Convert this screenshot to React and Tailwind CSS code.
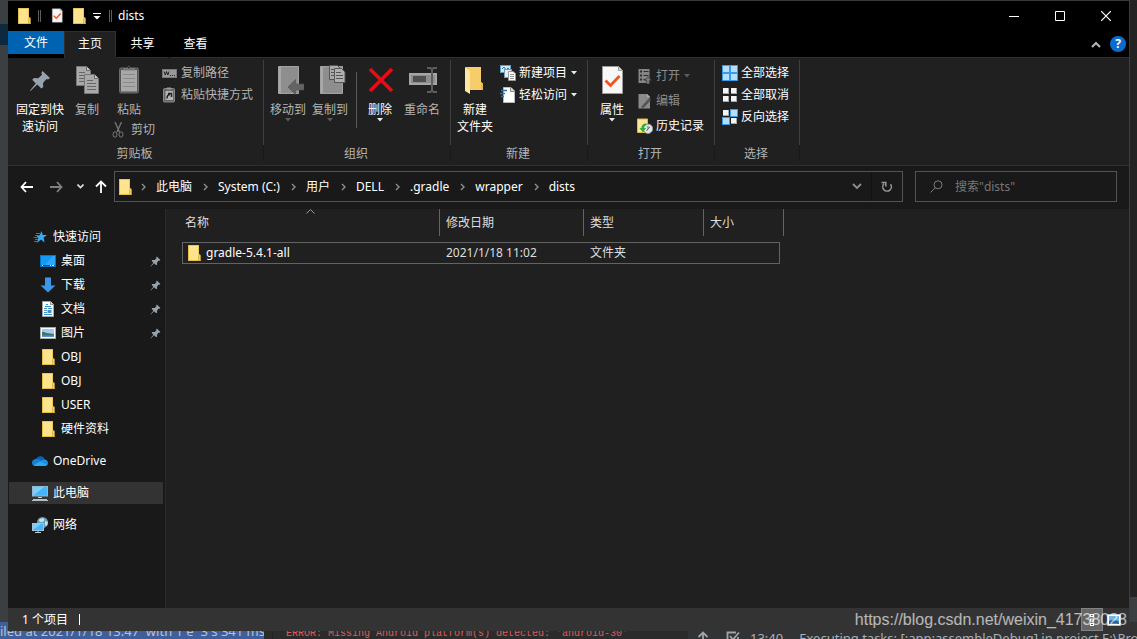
// src/App.jsx
import React, { useState } from 'react';

/* ---------- icons ---------- */

const FolderIcon = () => (
  <svg width="16" height="16" viewBox="0 0 16 16" className="shrink-0">
    <path d="M2 0h11v9.500l1.500.8V16H2z" fill="#ffe48d" />
    <path d="M2 15h12.500v1H2zM2 0h1v16H2zM12.300 0h.7v9.500h-.7zM2 0h11v.7H2z" fill="#e6bd45" />
    <path d="M12.500 10.500l1.500-1v6h-1.500z" fill="#ffe48d" stroke="#d9ab33" strokeWidth="0.8" />
  </svg>
);

const BigFolderIcon = () => (
  <svg width="32" height="32" viewBox="0 0 32 32">
    <path d="M6 2h16v15l2 1.500V25H11V6z" fill="#f7cd6b" />
    <path d="M6 2l5 3.500V29l-5-3z" fill="#ffe7a2" />
    <path d="M22 17l2 1.500V25h-2z" fill="#e9b84c" />
  </svg>
);

const CheckDocIcon = ({ size }) => (
  <svg width={size} height={size} viewBox="0 0 32 32" className="shrink-0">
    <path d="M6.500 1.500h16l4 4v23h-20z" fill="#f7f7f7" stroke="#9b9b9b" />
    <path d="M22.500 1.500v4h4" fill="#d8d8d8" stroke="#9b9b9b" />
    <path d="M9.500 15.500l5 5 9-9.500" fill="none" stroke="#f0541e" strokeWidth="2.800" />
  </svg>
);

const PinIcon = ({ size }) => (
  <svg width={size} height={size} viewBox="0 0 22 22" className="shrink-0">
    <path d="M13.500 1l7.500 7-2 1.500-1.500-.4-3.500 3.800.3 4-2 1.600-4-4L1.500 21 1 20.500l5.800-7-3.600-3.800L5 8l4.300.2L13 4.700 12.300 3z" fill="#98a2aa" />
  </svg>
);

const Sheet = ({ x, y }) => (
  <g transform={`translate(${x} ${y})`}>
    <path d="M.5.5h10l4 4v15H.5z" fill="#a9a9a9" stroke="#777" />
    <path d="M10.500.5v4h4" fill="#ccc" stroke="#666" />
    <path d="M3 6.500h6M3 9.500h9M3 12.500h9M3 15.500h9" stroke="#666" />
  </g>
);

const CopyIcon = () => (
  <svg width="32" height="32" viewBox="0 0 32 32">
    <Sheet x={5} y={1} />
    <Sheet x={13} y={9} />
  </svg>
);

const PasteIcon = () => (
  <svg width="32" height="32" viewBox="0 0 32 32">
    <rect x="6.500" y="3" width="19" height="25" rx="1.500" fill="#555" stroke="#6b6b6b" />
    <rect x="8" y="5" width="16" height="21.500" fill="#a8a8a8" />
    <path d="M10 9.500h12M10 13.500h12M10 17.500h12M10 21.500h12" stroke="#8a8a8a" />
    <path d="M10 5.500V3h4l2-2.500L18 3h4v2.500z" fill="#777" />
    <circle cx="16" cy="2.500" r="1" fill="#222" />
  </svg>
);

const ScissorsIcon = () => (
  <svg width="16" height="16" viewBox="0 0 16 16" fill="none" stroke="#777" className="shrink-0">
    <path d="M3 0l4.500 10M9.500 0L5 10" strokeWidth="1.300" />
    <ellipse cx="3" cy="12.500" rx="2" ry="2.700" />
    <ellipse cx="9" cy="12.500" rx="2" ry="2.700" />
  </svg>
);

const PathIcon = () => (
  <svg width="16" height="16" viewBox="0 0 16 16" className="shrink-0">
    <rect x="0.500" y="4.500" width="14" height="8" fill="#999" stroke="#777" />
    <path d="M2 6.500l1.300 3.500 1.200-3.500L5.800 10 7 6.500M8 10.500h1M10 10.500h1M12 10.500h1" fill="none" stroke="#222" />
  </svg>
);

const PasteLinkIcon = () => (
  <svg width="16" height="16" viewBox="0 0 16 16" className="shrink-0">
    <rect x="1.500" y="1.500" width="11" height="13.500" rx="1" fill="#666" stroke="#888" />
    <rect x="3.500" y="4" width="7.500" height="9" fill="#b5b5b5" />
    <path d="M5 0.500h4v2H5z" fill="#999" />
    <path d="M5 11.500c0-3 1-4 3-4M6 6.500h3.500V10" fill="none" stroke="#222" strokeWidth="1.500" />
  </svg>
);

const MoveToIcon = () => (
  <svg width="32" height="32" viewBox="0 0 32 32">
    <path d="M6.500 1.500h20v27h-20z" fill="#8e8e8e" stroke="#a2a2a2" />
    <path d="M7 2h2v26H7z" fill="#a8a8a8" />
    <path d="M16 22l7.500-7.500V19H32v6h-8.500v4.500z" fill="#646464" stroke="#505050" strokeWidth="0.600" />
  </svg>
);

const CopyToIcon = () => (
  <svg width="32" height="32" viewBox="0 0 32 32">
    <path d="M6.500 1.500h22v27h-22z" fill="#8e8e8e" stroke="#a2a2a2" />
    <path d="M7 2h2v26H7z" fill="#a8a8a8" />
    <path d="M15.500.5h8l3 3v11h-11z" fill="#aaa" stroke="#555" />
    <path d="M17 4.500h5M17 7.500h5M17 10.500h5" stroke="#555" />
    <path d="M20.500 3.500h7l3.500 3.500v10.500H20.500z" fill="#b0b0b0" stroke="#555" />
    <path d="M22 7.500h5M22 10.500h7M22 13.500h7" stroke="#555" />
  </svg>
);

const DeleteIcon = () => (
  <svg width="32" height="32" viewBox="0 0 32 32">
    <path d="M6 4l22 22M28 4L6 26" stroke="#e80c17" strokeWidth="3.600" />
  </svg>
);

const RenameIcon = () => (
  <svg width="32" height="32" viewBox="0 0 32 32">
    <rect x="4" y="9" width="26" height="10" fill="#8d8d8d" stroke="#a5a5a5" strokeWidth="2" />
    <rect x="7" y="11" width="13" height="6" fill="#4f4f4f" />
    <path d="M21 3h3l2 1 2-1h3M26 3.500V26M21 27h3l2-1 2 1h3" fill="none" stroke="#5e5e5e" strokeWidth="2" />
  </svg>
);

const NewItemIcon = () => (
  <svg width="16" height="16" viewBox="0 0 16 16" className="shrink-0">
    <rect x="0.500" y="0.500" width="10" height="7" fill="#cfe9fb" stroke="#5f9fc4" />
    <path d="M2 4l2-2 2 3 2-2 2 2" fill="none" stroke="#2f76b0" />
    <rect x="4.500" y="4.500" width="7" height="8" fill="#eee" stroke="#7b9bb0" />
    <path d="M8.500 6.500h4.500l2.500 2v7h-7z" fill="#fff" stroke="#999" />
    <path d="M10 9.500h4M10 11.500h4M10 13.500h4" stroke="#999" />
  </svg>
);

const EasyAccessIcon = () => (
  <svg width="16" height="16" viewBox="0 0 16 16" className="shrink-0">
    <path d="M3.500.5h7.500l3.500 3.500v11.500h-11z" fill="#fff" stroke="#bbb" />
    <path d="M10.500.5v4h4" fill="#ddd" stroke="#888" />
    <path d="M1 3.500h6M0 6.500h5M1 9.500h3" stroke="#1f73b8" strokeWidth="1.300" />
  </svg>
);

const OpenIcon = () => (
  <svg width="16" height="16" viewBox="0 0 16 16" className="shrink-0">
    <path d="M1.500 1h11v14h-11z" fill="#858585" />
    <path d="M3 2.500h2v2H3zM3 6.500h2v2H3zM3 10.500h2v2H3zM6.500 3h5v1h-5zM6.500 7h5v1h-5zM6.500 11h3v1h-3z" fill="#303030" />
    <path d="M9.500 16v-3.500H7.500l3.500-4 3.500 4h-2V16z" fill="#777" stroke="#303030" strokeWidth="0.600" />
  </svg>
);

const EditIcon = () => (
  <svg width="16" height="16" viewBox="0 0 16 16" className="shrink-0">
    <path d="M1.500 1h8.500l3 3v11.500H1.500z" fill="#8a8a8a" />
    <path d="M10 1v3h3" fill="#b0b0b0" />
    <path d="M5 13.500L12.500 5 14 6.500 7 14l-2 .5z" fill="#5a5a5a" stroke="#333" strokeWidth="0.500" />
  </svg>
);

const HistoryIcon = () => (
  <svg width="16" height="16" viewBox="0 0 16 16" className="shrink-0">
    <path d="M.5 1h10v13.500H.5z" fill="#fbe596" stroke="#e2b93c" />
    <circle cx="11" cy="10.800" r="4.700" fill="#e3e6e8" stroke="#8d9499" />
    <path d="M11 8v3l2-2M11 11l-1.500 2" stroke="#666" fill="none" />
    <path d="M9.500 5.500C6 5.500 4.500 7.500 4.500 10H2.500l3.500 4.500L9 10H7c0-1.500.8-2.500 2.500-3z" fill="#2eb135" />
  </svg>
);

const tileSpots = [[0, 0], [8, 0], [0, 8], [8, 8]];

const TilesIcon = ({ on }) => (
  <svg width="16" height="16" viewBox="0 0 16 16" className="shrink-0">
    {tileSpots.map(([x, y], index) => (
      on.includes(index) ? (
        <g key={index}>
          <rect x={x} y={y} width="8" height="8" fill="#3b9ae8" />
          <rect x={x + 1} y={y + 1} width="6" height="6" fill="#b4defc" />
        </g>
      ) : (
        <g key={index}>
          <rect x={x + 1} y={y + 1} width="6" height="6" fill="#a8a8a8" />
          <rect x={x + 2} y={y + 2} width="4" height="4" fill="#fff" />
          <rect x={x + 1} y={y + 1} width="5" height="5" fill="#f4f4f4" />
        </g>
      )
    ))}
  </svg>
);

const StarIcon = () => (
  <svg width="16" height="16" viewBox="0 0 16 16" className="shrink-0">
    <path d="M9.500 2l1.300 4H15l-3.400 2.600L12.500 13.500 9 10.600 5 14l1.300-5L4 6.300h3.800z" fill="#35adf5" />
    <path d="M4 4.500h4M3 6.500h4M1.500 8.500h5M3 10.500h3M2 12.500h4" stroke="#1c7fc4" />
  </svg>
);

const DesktopIcon = () => (
  <svg width="16" height="16" viewBox="0 0 16 16" className="shrink-0">
    <rect x="0.500" y="2.500" width="15" height="11" fill="#1298f5" stroke="#0b72c4" />
    <path d="M5 12L13 3h2v9z" fill="#2ea6fb" />
    <path d="M1 12.500h14" stroke="#0a4f8c" />
    <path d="M2 12.500h1M10 12.500h1M12 12.500h2" stroke="#fff" />
  </svg>
);

const DownloadIcon = () => (
  <svg width="16" height="16" viewBox="0 0 16 16" className="shrink-0">
    <path d="M5 .5h6v8h4.500L8 15.500.5 8.500H5z" fill="#3a97e8" />
  </svg>
);

const DocumentIcon = () => (
  <svg width="16" height="16" viewBox="0 0 16 16" className="shrink-0">
    <path d="M2.500.5h8l3 3v12h-11z" fill="#fff" stroke="#a5a5a5" />
    <path d="M10.500.5v3h3" fill="#ddd" stroke="#999" />
    <path d="M6 3.500h2M5 5.500h6M4 7.500h3M8 7.500h4M4 13.500h8M4 11.500h3" stroke="#3291cf" />
    <path d="M7.500 9h4v3h-4z" fill="#4c92b8" />
    <path d="M4 9.500h3" stroke="#888" />
  </svg>
);

const PictureIcon = () => (
  <svg width="16" height="16" viewBox="0 0 16 16" className="shrink-0">
    <rect x="0.500" y="2.500" width="15" height="11" fill="#fff" stroke="#a9a9a9" />
    <path d="M2 4h12v8H2z" fill="#9fcdf0" />
    <path d="M2 7c2-1 3 1 5 1s4 1 7 1v3H2z" fill="#3f7268" />
    <path d="M2 10.500h12V12H2z" fill="#5b93c2" />
  </svg>
);

const CloudIcon = () => (
  <svg width="16" height="16" viewBox="0 0 16 16" className="shrink-0">
    <path d="M4 6.500C5 3.500 8 2.500 10 3.500c1.500.6 2.300 1.800 2.600 3L9 10z" fill="#0a62b8" />
    <path d="M3.500 6C1.500 6.200 0 7.800 0 9.700c0 1 .4 2 1 2.600L9.500 8.500C8 6.500 6 5.500 3.500 6z" fill="#1180d8" />
    <path d="M12 6.400c2.300-.2 4 1.400 4 3.500 0 .8-.3 1.500-.8 2.100L8.500 8.400C9.200 7.200 10.500 6.500 12 6.400z" fill="#1a90e6" />
    <path d="M8.500 8.300l7 3.500c-.6.800-1.500 1.200-2.500 1.200H3.500c-1 0-1.900-.3-2.500-.9z" fill="#2aa9f2" />
  </svg>
);

const ComputerIcon = () => (
  <svg width="16" height="16" viewBox="0 0 16 16" className="shrink-0">
    <rect x="0.500" y="1.500" width="15" height="9.500" fill="#45b3f7" stroke="#8fb9d3" />
    <path d="M1 11V2h11z" fill="#7bcdfb" />
    <path d="M6 12.500h4" stroke="#c3ccd2" />
    <path d="M1 14.500h14M0 15.500h16" stroke="#b4bdc3" />
  </svg>
);

const NetworkIcon = () => (
  <svg width="16" height="16" viewBox="0 0 16 16" className="shrink-0">
    <circle cx="10.500" cy="5.500" r="5.500" fill="#6b9fb8" />
    <path d="M7 3c2-2 4-2 5-1s-1 3-2 3-3 0-3-2zM13 4l3 1-1 4-2-1z" fill="#c9e2ea" />
    <rect x="0.500" y="6.500" width="11" height="7" fill="#45b3f7" stroke="#9cc4da" />
    <path d="M1 13V7h8z" fill="#7bcdfb" />
    <path d="M3 15.500h6M6 14v1" stroke="#c3ccd2" />
  </svg>
);

const Caret = ({ className = 'fill-[#e8e8e8]' }) => (
  <svg width="6" height="4" viewBox="0 0 6 4" className={`shrink-0 ${className}`}>
    <path d="M0 0h6L3 3.500z" />
  </svg>
);

const Chevron = () => (
  <svg width="5" height="8" viewBox="0 0 5 8" className="shrink-0">
    <path d="M1 1l3 3-3 3" fill="none" stroke="#8f8f8f" strokeWidth="1.400" />
  </svg>
);

const Bars = () => <span className="h-3 w-[3px] border-x border-[#5c5c5c]" />;

/* ---------- ribbon ---------- */

const BigButton = ({ icon, lines, caret, muted, className = 'w-[42px]' }) => (
  <button className={`flex shrink-0 flex-col items-center pt-[5px] leading-[17px] ${muted ? 'text-[#b4b4b4]' : 'text-white'} ${className}`}>
    <span className="mb-1 size-8">{icon}</span>
    {lines.map((line) => (
      <span key={line} className="whitespace-nowrap">{line}</span>
    ))}
    {caret && <Caret className={muted ? 'fill-[#5c5c5c]' : 'fill-[#e8e8e8]'} />}
  </button>
);

const SmallButton = ({ icon, label, caret, tone = 'text-white', className = 'h-[22px]' }) => (
  <button className={`flex items-center gap-[3px] whitespace-nowrap ${tone} ${className}`}>
    {icon}
    <span>{label}</span>
    {caret && <Caret className={tone === 'text-white' ? 'ml-px fill-[#e8e8e8]' : 'ml-px fill-[#5c5c5c]'} />}
  </button>
);

const Group = ({ label, className, children }) => (
  <section className={`flex shrink-0 flex-col ${className}`}>
    <div className="flex h-[85px] border-r border-[#3f3f3f]">{children}</div>
    <h2 className="h-4 border-r border-[#191919] pr-[2px] text-center leading-[18px] text-[#b4b4b4]">{label}</h2>
  </section>
);

const Ribbon = () => (
  <div className="flex h-[108px] shrink-0 overflow-hidden border-b border-[#2f2f2f] bg-[#202020] pt-[2px]">
    <Group label="剪贴板" className="w-64">
      <BigButton className="ml-2 w-12" icon={<span className="flex size-8 items-center justify-center"><PinIcon size={22} /></span>} lines={['固定到快', '速访问']} />
      <BigButton className="ml-[2px] w-[42px]" muted icon={<CopyIcon />} lines={['复制']} />
      <div className="flex w-[46px] flex-col">
        <BigButton className="w-[42px]" muted icon={<PasteIcon />} lines={['粘贴']} />
        <SmallButton className="ml-1 h-6" tone="text-[#b4b4b4]" icon={<ScissorsIcon />} label="剪切" />
      </div>
      <div className="ml-2 flex flex-col pt-[2px]">
        <SmallButton tone="text-[#b4b4b4]" icon={<PathIcon />} label="复制路径" />
        <SmallButton tone="text-[#b4b4b4]" icon={<PasteLinkIcon />} label="粘贴快捷方式" />
      </div>
    </Group>
    <Group label="组织" className="w-[187px]">
      <BigButton className="ml-[3px] w-[42px]" muted caret icon={<MoveToIcon />} lines={['移动到']} />
      <BigButton muted caret icon={<CopyToIcon />} lines={['复制到']} />
      <span className="ml-[5px] mr-[2px] mt-3 h-14 w-px bg-[#5a5a5a]" />
      <BigButton caret icon={<DeleteIcon />} lines={['删除']} />
      <BigButton muted icon={<RenameIcon />} lines={['重命名']} />
    </Group>
    <Group label="新建" className="w-[137px]">
      <BigButton className="ml-[3px] w-[42px]" icon={<BigFolderIcon />} lines={['新建', '文件夹']} />
      <div className="ml-1 flex flex-col pt-[2px]">
        <SmallButton caret icon={<NewItemIcon />} label="新建项目" />
        <SmallButton caret icon={<EasyAccessIcon />} label="轻松访问" />
      </div>
    </Group>
    <Group label="打开" className="w-[127px]">
      <BigButton className="ml-[3px] w-[42px]" caret icon={<CheckDocIcon size={32} />} lines={['属性']} />
      <div className="ml-1 flex flex-col pt-[3px]">
        <SmallButton className="h-[25px]" tone="text-[#8c8c8c]" caret icon={<OpenIcon />} label="打开" />
        <SmallButton className="h-[25px]" tone="text-[#8c8c8c]" icon={<EditIcon />} label="编辑" />
        <SmallButton className="h-[25px]" icon={<HistoryIcon />} label="历史记录" />
      </div>
    </Group>
    <Group label="选择" className="w-[85px]">
      <div className="ml-[7px] flex flex-col pt-[2px]">
        <SmallButton icon={<TilesIcon on={[0, 1, 2, 3]} />} label="全部选择" />
        <SmallButton icon={<TilesIcon on={[]} />} label="全部取消" />
        <SmallButton icon={<TilesIcon on={[1, 2]} />} label="反向选择" />
      </div>
    </Group>
  </div>
);

/* ---------- window chrome ---------- */

const TitleBar = () => (
  <header className="flex h-[30px] shrink-0 items-center bg-black text-white">
    <div className="flex items-center pl-2">
      <FolderIcon />
      <span className="ml-[6px] mr-2 flex"><Bars /></span>
      <button aria-label="属性"><CheckDocIcon size={16} /></button>
      <button aria-label="新建文件夹" className="ml-[6px]"><FolderIcon /></button>
      <button aria-label="自定义快速访问工具栏" className="ml-[6px] mr-2">
        <svg width="8" height="8" viewBox="0 0 8 8"><path d="M0 1.500h8" stroke="#fff" /><path d="M.5 4h7L4 7.500z" fill="#fff" /></svg>
      </button>
      <Bars />
    </div>
    <h1 className="ml-[6px] flex-1">dists</h1>
    <button aria-label="最小化" className="flex h-full w-[46px] items-center justify-center">
      <svg width="10" height="10" viewBox="0 0 10 10"><path d="M0 5.500h10" stroke="#fff" /></svg>
    </button>
    <button aria-label="最大化" className="flex h-full w-[46px] items-center justify-center">
      <svg width="10" height="10" viewBox="0 0 10 10"><path d="M.5.5h9v9h-9z" fill="none" stroke="#fff" /></svg>
    </button>
    <button aria-label="关闭" className="flex h-full w-[46px] items-center justify-center">
      <svg width="10" height="10" viewBox="0 0 10 10"><path d="M0 0l10 10M10 0L0 10" stroke="#fff" strokeWidth="1.200" /></svg>
    </button>
  </header>
);

const TabBar = () => {
  const [active, setActive] = useState('主页');

  return (
    <nav className="flex h-[27px] shrink-0 items-start bg-black text-white">
      <button className="h-[23px] w-14 bg-[#0063b1]">文件</button>
      {['主页', '共享', '查看'].map((tab) => (
        <button
          key={tab}
          onClick={() => setActive(tab)}
          className={`h-[27px] border pb-[2px] ${tab === '主页' ? 'w-[52px]' : 'w-[53px]'} ${active === tab ? 'border-[#303030] border-b-[#202020] bg-[#202020]' : 'border-transparent border-b-[#303030]'}`}
        >
          {tab}
        </button>
      ))}
      <div className="flex h-[27px] flex-1 items-center justify-end gap-[9px] border-b border-[#303030] pr-[3px]">
        <button aria-label="最小化功能区">
          <svg width="10" height="7" viewBox="0 0 10 7"><path d="M1 6l4-4 4 4" fill="none" stroke="#b0b0b0" strokeWidth="2.200" /></svg>
        </button>
        <button aria-label="帮助" className="flex size-4 items-center justify-center rounded-full bg-[#0a6ccd] font-bold leading-4">?</button>
      </div>
    </nav>
  );
};

const crumbs = ['此电脑', 'System (C:)', '用户', 'DELL', '.gradle', 'wrapper', 'dists'];

const AddressBar = () => (
  <div className="flex h-[43px] shrink-0 items-center gap-3 bg-[#191919] px-3 pb-[2px]">
    <div className="flex flex-1 items-center">
      <div className="flex w-[94px] items-center">
        <button aria-label="后退" className="mr-[17px]">
          <svg width="13" height="12" viewBox="0 0 13 12"><path d="M13 6H1.500M6 1L1.500 6 6 11" fill="none" stroke="#fff" strokeWidth="1.800" /></svg>
        </button>
        <button aria-label="前进" className="mr-[14px]">
          <svg width="13" height="12" viewBox="0 0 13 12"><path d="M0 6h11.500M7 1l4.500 5L7 11" fill="none" stroke="#808080" strokeWidth="1.800" /></svg>
        </button>
        <button aria-label="最近浏览的位置" className="mr-[11px]">
          <svg width="7" height="5" viewBox="0 0 7 5"><path d="M.5.5l3 3 3-3" fill="none" stroke="#e0e0e0" strokeWidth="1.600" /></svg>
        </button>
        <button aria-label="向上">
          <svg width="12" height="13" viewBox="0 0 12 13"><path d="M6 13V1.500M1 6.500l5-5 5 5" fill="none" stroke="#fff" strokeWidth="1.800" /></svg>
        </button>
      </div>
      <div className="flex h-[31px] flex-1 items-center border border-[#535353] text-white">
        <span className="ml-[2px] mr-2"><FolderIcon /></span>
        <ol className="flex flex-1 items-center gap-[11px]">
          {crumbs.map((crumb) => (
            <li key={crumb} className="flex items-center gap-[10px] whitespace-nowrap">
              <Chevron />
              <a href="#">{crumb}</a>
            </li>
          ))}
        </ol>
        <button aria-label="以前的位置" className="px-[9px]">
          <svg width="10" height="7" viewBox="0 0 10 7"><path d="M1 1l4 4 4-4" fill="none" stroke="#8f8f8f" strokeWidth="1.800" /></svg>
        </button>
        <button aria-label="刷新" className="flex h-full w-[31px] items-center justify-center border-l border-[#111]">
          <svg width="12" height="13" viewBox="0 0 12 13"><path d="M9.500 4.200A4.300 4.300 0 1 1 3 3.800M.5 2.500h4.300v4" fill="none" stroke="#999" strokeWidth="1.500" /></svg>
        </button>
      </div>
    </div>
    <label className="flex h-[31px] w-[202px] items-center border border-[#535353] pl-[14px]">
      <svg width="13" height="13" viewBox="0 0 13 13" className="mr-3 shrink-0"><circle cx="8" cy="4.800" r="4" fill="none" stroke="#7a7a7a" /><path d="M5 8L.5 12.500" stroke="#7a7a7a" /></svg>
      <input aria-label="搜索" placeholder={'搜索"dists"'} className="w-full bg-transparent text-white outline-none placeholder:text-[#777]" />
    </label>
  </div>
);

/* ---------- body ---------- */

const quickItems = [
  { name: '桌面', icon: DesktopIcon, pinned: true },
  { name: '下载', icon: DownloadIcon, pinned: true },
  { name: '文档', icon: DocumentIcon, pinned: true },
  { name: '图片', icon: PictureIcon, pinned: true },
  { name: 'OBJ', icon: FolderIcon },
  { name: 'OBJ', icon: FolderIcon },
  { name: 'USER', icon: FolderIcon },
  { name: '硬件资料', icon: FolderIcon },
];

const rootItem = 'flex h-[22px] items-center gap-[5px] pl-[23px]';

const Sidebar = () => (
  <aside className="w-[158px] shrink-0 border-r border-[#2b2b2b] bg-[#191919] pl-px pt-[17px] text-white">
    <a href="#" className={rootItem}><StarIcon />快速访问</a>
    <ul className="flex flex-col">
      {quickItems.map(({ name, icon: Icon, pinned }, index) => (
        <li key={index}>
          <a href="#" className="mt-[2px] flex h-[22px] items-center gap-[5px] pl-[31px] pr-1">
            <Icon />
            <span className="flex-1">{name}</span>
            {pinned && <PinIcon size={11} />}
          </a>
        </li>
      ))}
    </ul>
    <div className="mt-[10px] flex flex-col gap-[10px]">
      <a href="#" className={rootItem}><CloudIcon />OneDrive</a>
      <a href="#" className={`${rootItem} mr-[2px] bg-[#333]`}><ComputerIcon />此电脑</a>
      <a href="#" className={rootItem}><NetworkIcon />网络</a>
    </div>
  </aside>
);

const columns = [
  { label: '名称', width: 'w-[258px]', pad: 'pl-[3px]', sorted: true },
  { label: '修改日期', width: 'w-36', pad: 'pl-[6px]' },
  { label: '类型', width: 'w-[120px]', pad: 'pl-[6px]' },
  { label: '大小', width: 'w-20', pad: 'pl-[6px]' },
];

const FileList = () => (
  <main className="flex-1 pl-4">
    <table className="table-fixed border-collapse text-left text-[#dedede]">
      <thead>
        <tr>
          {columns.map(({ label, width, pad, sorted }) => (
            <th key={label} className={`p-0 pb-[6px] font-normal ${width}`}>
              <div className={`relative flex h-[27px] items-center border-r border-[#636363] ${pad}`}>
                {label}
                {sorted && (
                  <svg width="9" height="5" viewBox="0 0 9 5" className="absolute inset-x-0 top-0 mx-auto"><path d="M.5 4.500l4-4 4 4" fill="none" stroke="#9a9a9a" /></svg>
                )}
              </div>
            </th>
          ))}
        </tr>
      </thead>
      <tbody>
        <tr className="relative h-[22px]">
          <td className="p-0">
            <span className="absolute inset-y-0 left-0 right-1 border border-[#636363]" />
            <div className="flex items-center gap-1 pl-1 text-white"><FolderIcon />gradle-5.4.1-all</div>
          </td>
          <td className="p-0 pl-[6px]">2021/1/18 11:02</td>
          <td className="p-0 pl-[6px]">文件夹</td>
          <td className="p-0" />
        </tr>
      </tbody>
    </table>
  </main>
);

const StatusBar = () => (
  <footer className="flex h-[23px] shrink-0 items-center bg-[#333] pl-[14px] pr-2 text-white">
    <span>1 个项目</span>
    <span className="ml-[11px] h-[11px] w-px bg-white" />
    <div className="ml-auto flex h-full items-center gap-1">
      <button aria-label="详细信息" className="flex h-full w-[22px] items-center justify-center border border-[#838383] bg-[#666]">
        <svg width="12" height="12" viewBox="0 0 12 12"><path d="M4 0h4v3H4zM4 4.500h4v3H4zM4 9h4v3H4z" fill="#fff" /><path d="M5 1.500h2M5 6h2M5 10.500h2" stroke="#555" /></svg>
      </button>
      <button aria-label="大缩略图">
        <svg width="14" height="12" viewBox="0 0 14 12"><path d="M.5.5h13v11H.5z" fill="#fff" stroke="#bbb" /><path d="M2 2h10v8H2z" fill="#6db5ec" /><path d="M2 7c3-2 5 0 10 0v3H2z" fill="#2c628e" /></svg>
      </button>
    </div>
  </footer>
);

// Strip of the IDE that shows under the explorer window
const IdeStrip = () => (
  <div className="-mt-[9px] flex h-[17px] shrink-0 overflow-hidden whitespace-pre bg-[#2b2b2b]">
    <p className="w-[264px] shrink-0 overflow-hidden bg-[#3f5f9c] text-[13px] leading-[18px] text-[#b9c2d0]">
      iled at 2021/1/18 13:47  with 1 e  3 s 341 ms
    </p>
    <p className="ml-2 flex-1 border-l border-[#222] pl-[13px] pt-[6px] font-['Liberation_Mono',monospace] text-[10px] leading-3 text-[#e05a5a]">
      ERROR: Missing Android platform(s) detected: 'android-30'
    </p>
    <div className="flex w-[449px] shrink-0 items-start bg-[#313335] pt-[8px] text-[13px] leading-4 text-[#a9b0b5]">
      <svg width="12" height="12" viewBox="0 0 12 12" className="ml-[9px] mt-px shrink-0"><path d="M6 12V1.500M1.500 6L6 1.500 10.500 6" fill="none" stroke="#a0a4a6" strokeWidth="1.800" /></svg>
      <svg width="14" height="12" viewBox="0 0 14 12" className="ml-[17px] mt-px shrink-0"><path d="M10 1.500H1.500V12M12 6v6M4 5l3 3.500 6-7" fill="none" stroke="#a0a4a6" strokeWidth="1.800" /></svg>
      <span className="ml-[10px]">13:40</span>
      <span className="ml-4">Executing tasks: [:app:assembleDebug] in project E:\Project</span>
    </div>
  </div>
);

const App = () => {
  return (
    <div className="relative flex h-screen flex-col overflow-hidden bg-[#2b2b2b] font-['Noto_Sans','Noto_Sans_CJK_SC',sans-serif] text-[12px] leading-4">
      <div className="flex min-h-0 flex-1">
        <div className="w-2 shrink-0 bg-[#3c3f41] pt-6">
          <div className="h-[21px] bg-[#0d293e]" />
        </div>
        <div className="relative z-10 flex min-w-0 flex-1 flex-col border-t border-[#3a3a3a] bg-[#202020]">
          <TitleBar />
          <TabBar />
          <Ribbon />
          <AddressBar />
          <div className="flex min-h-0 flex-1">
            <Sidebar />
            <FileList />
          </div>
          <StatusBar />
        </div>
        <div className="flex w-2 shrink-0 flex-col justify-end border-l border-[#3c3c3c] bg-[#232323]">
          <div className="h-[34px] bg-[#3c3f41]" />
        </div>
      </div>
      <IdeStrip />
      <p className="absolute bottom-[9px] right-[10px] z-20 font-['Liberation_Sans',sans-serif] text-[16px] leading-5 text-white/65">
        https://blog.csdn.net/weixin_41738028
      </p>
    </div>
  );
};

export default App;
